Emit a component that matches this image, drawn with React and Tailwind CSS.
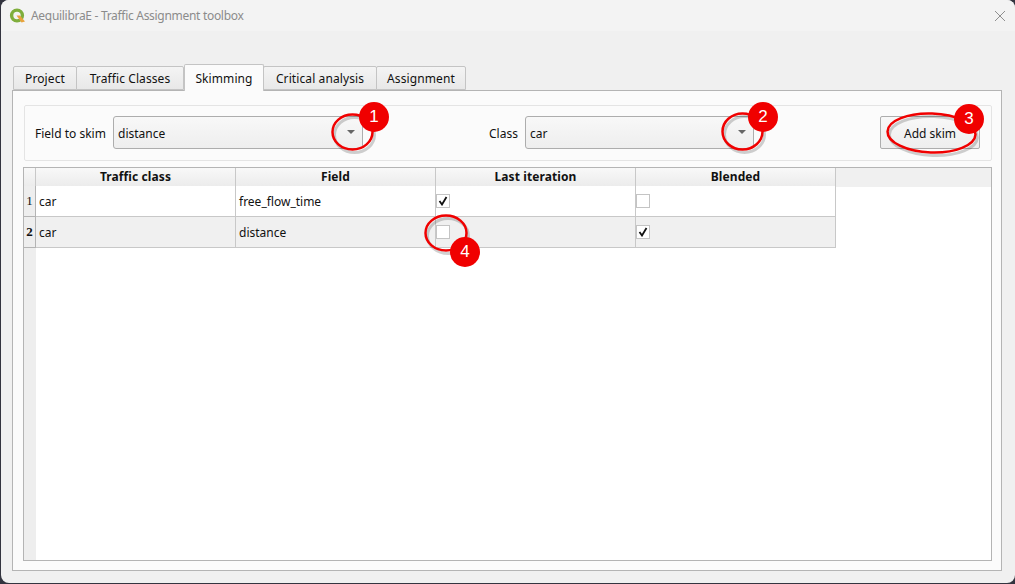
import { Fragment } from "react";

const tabs = [
  { name: "Project", width: "w-[64px]" },
  { name: "Traffic Classes", width: "w-[108px]" },
  { name: "Skimming", width: "w-[80px]", active: true },
  { name: "Critical analysis", width: "w-[114px]" },
  { name: "Assignment", width: "w-[90px]" },
];

const rows = [
  { id: 1, traffic: "car", field: "free_flow_time", last: true, blended: false },
  { id: 2, traffic: "car", field: "distance", last: false, blended: true, current: true },
];

const rings = [
  { cx: 352.5, cy: 132, rx: 20, ry: 17.5, tilt: 0 },
  { cx: 742.5, cy: 131.5, rx: 20, ry: 18, tilt: 0 },
  { cx: 931.5, cy: 133, rx: 44, ry: 19.5, tilt: 2 },
  { cx: 446, cy: 233, rx: 20.5, ry: 17.5, tilt: 0 },
];

const badges = [
  { label: "1", pos: "left-[359px] top-[102px]" },
  { label: "2", pos: "left-[748px] top-[102px]" },
  { label: "3", pos: "left-[954px] top-[104px]" },
  { label: "4", pos: "left-[450px] top-[237px]" },
];

function QgisLogo() {
  return (
    <svg width="17" height="16" viewBox="0 0 17 16" className="shrink-0">
      <circle cx="8" cy="7.5" r="5.4" fill="none" stroke="#7fae3c" strokeWidth="3.4" />
      <path d="M7.5 7.5 L11 7.5 L16 13.5 L12.5 14.5 Z" fill="#e8a33d" />
    </svg>
  );
}

function Combo({ value, width }) {
  return (
    <div className={`${width} h-[33px] mb-[2px] flex items-center rounded-[3px] border border-[#adadad] bg-gradient-to-b from-[#f8f8f8] to-[#eeeeee]`}>
      <span className="flex-1 pl-[4px] pt-[4px]">{value}</span>
      <span className="w-[22px] h-full flex items-center justify-center">
        <span className="w-0 h-0 border-x-[4px] border-x-transparent border-t-[4px] border-t-[#666666]" />
      </span>
    </div>
  );
}

function Check({ checked }) {
  return (
    <span className="w-[14px] h-[14px] flex items-center justify-center border border-[#c4c4c4] bg-white">
      {checked && (
        <svg width="10" height="10" viewBox="0 0 10 10">
          <path d="M1.5 5 L4 8.5 L8.5 1" fill="none" stroke="#111111" strokeWidth="1.8" />
        </svg>
      )}
    </span>
  );
}

function HeaderCell({ children, className = "" }) {
  return (
    <div className={`flex items-center justify-center font-bold tracking-[0.1px] border-r border-b border-[#c8c8c8] bg-gradient-to-b from-[#f8f8f8] to-[#ececec] ${className}`}>
      {children}
    </div>
  );
}

export default function App() {
  return (
    <div className="relative w-[1015px] h-[584px] overflow-hidden bg-[#33343f] text-[12px] text-[#111111] font-['Noto_Sans','Liberation_Sans',sans-serif]">
      <div className="w-[1014px] h-[583px] ml-px rounded-lg overflow-hidden flex flex-col bg-[#f0f0f0]">
        <div className="h-[31px] shrink-0 flex items-center bg-[#f3f3f3] pl-[8px] pr-[9px] gap-[5px]">
          <QgisLogo />
          <span className="flex-1 text-[#8b8b8b] tracking-[-0.3px]">AequilibraE - Traffic Assignment toolbox</span>
          <svg width="12" height="12" viewBox="0 0 12 12">
            <path d="M1 1 L11 11 M11 1 L1 11" stroke="#8f8f8f" strokeWidth="1" fill="none" />
          </svg>
        </div>

        <div className="flex-1 flex flex-col pl-[11px] pr-[13px] pt-[33px] pb-[12px]">
          <div className="h-[26px] flex items-end pl-px relative z-10">
            {tabs.map((tab) => (
              <div
                key={tab.name}
                className={`${tab.width} flex items-center justify-center tracking-[0.1px] rounded-t-[2px] border border-[#c4c4c4] ${
                  tab.active
                    ? "h-[27px] -mb-px border-b-0 bg-[#fbfbfb] pt-px"
                    : "h-[24px] -ml-px first:ml-0 pt-[2px] bg-gradient-to-b from-[#f4f4f4] to-[#e8e8e8]"
                }`}
              >
                {tab.name}
              </div>
            ))}
          </div>

          <div className="flex-1 flex flex-col gap-[6px] border border-[#b4b4b4] bg-[#fbfbfb] pl-[10px] pr-[9px] pt-[14px] pb-[9px]">
            <div className="h-[56px] shrink-0 flex items-center ml-px border border-[#e4e4e4] rounded-[2px] pl-[10px] pr-[11px]">
              <span className="w-[78px] pt-[2px]">Field to skim</span>
              <Combo value="distance" width="w-[250px]" />
              <span className="ml-[126px] w-[36px] pt-[2px]">Class</span>
              <Combo value="car" width="w-[229px]" />
              <div className="ml-auto w-[100px] h-[33px] mb-[2px] pt-[4px] flex items-center justify-center rounded-[2px] border border-[#adadad] bg-gradient-to-b from-[#f8f8f8] to-[#eeeeee]">
                Add skim
              </div>
            </div>

            <div className="flex-1 flex flex-col border border-[#b4b4b4] bg-white relative">
              <div className="grid grid-cols-[12px_200px_200px_200px_200px_1fr] h-[18px] shrink-0">
                <HeaderCell />
                <HeaderCell>Traffic class</HeaderCell>
                <HeaderCell>Field</HeaderCell>
                <HeaderCell>Last iteration</HeaderCell>
                <HeaderCell>Blended</HeaderCell>
                <div className="bg-[#f0f0f0]" />
              </div>
              <div className="flex-1 flex">
                <div className="w-[12px] shrink-0 bg-[#eeeeee]" />
                <div className="flex-1 -ml-[12px] grid grid-cols-[12px_200px_200px_200px_200px] auto-rows-[31px]">
                  {rows.map((row) => {
                    const cell = `flex items-center border-r border-b border-[#c8c8c8] ${row.current ? "bg-[#f0f0f0]" : "bg-white"}`;
                    return (
                      <Fragment key={row.id}>
                        <div className={`flex items-center justify-center border-r border-b border-[#b4b4b4] bg-[#eeeeee] text-[13px] font-['Liberation_Serif',serif] ${row.current ? "font-bold" : ""}`}>
                          {row.id}
                        </div>
                        <div className={`${cell} pl-[3px] pt-px`}>{row.traffic}</div>
                        <div className={`${cell} pl-[3px] pt-px`}>{row.field}</div>
                        <div className={cell}><Check checked={row.last} /></div>
                        <div className={cell}><Check checked={row.blended} /></div>
                      </Fragment>
                    );
                  })}
                </div>
              </div>
            </div>
          </div>
        </div>
      </div>

      {/* annotations painted on top of the screenshot */}
      <svg className="absolute inset-0 pointer-events-none" width="1015" height="584">
        {rings.map((r) => (
          <g key={r.cx} transform={`rotate(${r.tilt} ${r.cx} ${r.cy})`}>
            <ellipse cx={r.cx + 2} cy={r.cy + 3} rx={r.rx} ry={r.ry} fill="none" stroke="#000000" strokeOpacity="0.18" strokeWidth="3" />
            <ellipse cx={r.cx} cy={r.cy} rx={r.rx} ry={r.ry} fill="none" stroke="#f00000" strokeWidth="2.5" />
          </g>
        ))}
      </svg>
      {badges.map((b) => (
        <div
          key={b.label}
          className={`absolute ${b.pos} w-[30px] h-[30px] rounded-full bg-[#f00000] text-white flex items-center justify-center text-[17px] font-['Liberation_Sans',sans-serif]`}
        >
          {b.label}
        </div>
      ))}
    </div>
  );
}
